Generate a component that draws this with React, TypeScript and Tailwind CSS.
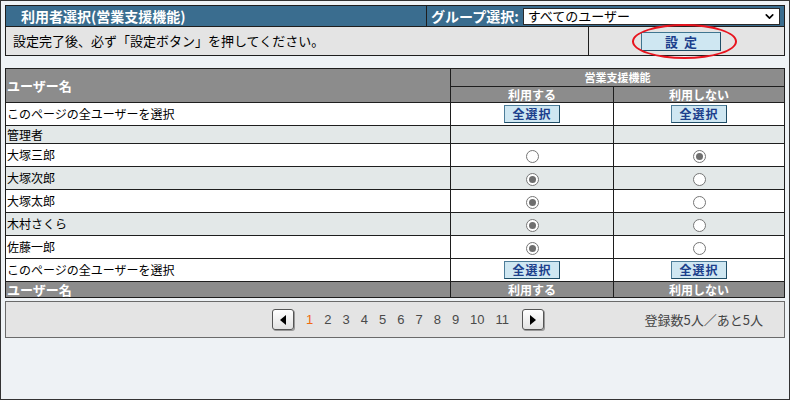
import React from 'react';
import { ChevronDown } from 'lucide-react';

const font = { fontFamily: '"Noto Sans CJK JP", "Liberation Sans", sans-serif' };

type User = { name: string; use: boolean; shade: boolean };

const users: User[] = [
  { name: '大塚三郎', use: false, shade: false },
  { name: '大塚次郎', use: true, shade: true },
  { name: '大塚太郎', use: true, shade: false },
  { name: '木村さくら', use: true, shade: true },
  { name: '佐藤一郎', use: true, shade: false },
];

const Radio = ({ checked }: { checked: boolean }) => (
  <span className="inline-flex items-center justify-center w-[13px] h-[13px] rounded-full border border-[#767676] bg-white align-middle">
    {checked && <span className="w-[7px] h-[7px] rounded-full bg-[#6f6f6f]" />}
  </span>
);

const SelectAllButton = () => (
  <button className="h-[18px] px-[7px] bg-[#cfe7f2] border border-[#4d7d99] border-r-[#1f4d66] border-b-[#1f4d66] text-[12px] leading-none font-bold text-[#1c3f8c] tracking-[1px]">
    全選択
  </button>
);

const PageArrow = ({ dir }: { dir: 'left' | 'right' }) => (
  <button className="w-[22px] h-[21px] flex items-center justify-center rounded-[3px] border border-[#555] bg-gradient-to-b from-white to-[#e2e2e2] shadow-[1px_1px_0_#999]">
    <svg width="6" height="10" viewBox="0 0 6 10">
      {dir === 'left' ? <polygon points="6,0 6,10 0,5" fill="#000" /> : <polygon points="0,0 0,10 6,5" fill="#000" />}
    </svg>
  </button>
);

export default function App() {
  return (
    <div className="w-[790px] h-[400px] bg-[#eef2f5] border border-[#333] px-[4px] pt-[4px] text-[13px] text-black" style={font}>
      {/* title bar */}
      <div className="flex h-[22px] border border-[#1e1e1e] bg-[#3a6d8f]">
        <div className="w-[421px] flex items-center pl-[15px] text-white font-bold text-[14px] border-r border-[#1e1e1e]">
          利用者選択(営業支援機能)
        </div>
        <div className="flex-1 flex items-center pl-[4px] pr-[4px] gap-[4px]">
          <span className="text-white font-bold text-[14px] whitespace-nowrap">グループ選択:</span>
          <div className="flex-1 h-[17px] bg-white border border-[#2a2a2a] flex items-center justify-between pl-[4px] pr-[3px] text-[13px]">
            <span>すべてのユーザー</span>
            <ChevronDown size={13} strokeWidth={3} />
          </div>
        </div>
      </div>

      {/* notice row */}
      <div className="flex h-[29px] border border-t-0 border-[#1e1e1e] bg-[#e4e4e4]">
        <div className="w-[583px] flex items-center pl-[7px] border-r border-[#1e1e1e]">
          設定完了後、必ず「設定ボタン」を押してください。
        </div>
        <div className="flex-1 flex items-center relative">
          <span className="absolute left-[43px] top-[-3px] w-[105px] h-[35px] rounded-[50%] border-2 border-[#e8141e]" />
          <button className="ml-[52px] w-[80px] h-[19px] bg-[#cfe7f2] border border-[#3f7590] border-r-[#1f4d66] border-b-[#1f4d66] text-[#1c3f8c] font-bold text-[13px] leading-none tracking-[6px] pl-[6px]">
            設定
          </button>
        </div>
      </div>

      {/* table */}
      <table className="mt-[12px] w-[780px] border-collapse border border-[#1e1e1e] text-[12px]">
        <thead>
          <tr className="bg-[#8c8c8c] text-white font-bold h-[18px]">
            <th rowSpan={2} className="w-[445px] border border-[#1e1e1e] text-left pl-[1px] text-[13px] font-bold">ユーザー名</th>
            <th colSpan={2} className="border border-[#1e1e1e] text-[11px] font-bold">営業支援機能</th>
          </tr>
          <tr className="bg-[#8c8c8c] text-white h-[16px]">
            <th className="w-[163px] border border-[#1e1e1e] text-[12px] leading-none font-bold">利用する</th>
            <th className="border border-[#1e1e1e] text-[12px] leading-none font-bold">利用しない</th>
          </tr>
        </thead>
        <tbody>
          <tr className="bg-white h-[23px]">
            <td className="border border-[#1e1e1e] pl-[1px]">このページの全ユーザーを選択</td>
            <td className="border border-[#1e1e1e] text-center"><SelectAllButton /></td>
            <td className="border border-[#1e1e1e] text-center"><SelectAllButton /></td>
          </tr>
          <tr className="bg-[#e3e8e8] h-[18px]">
            <td className="border border-[#1e1e1e] pl-[1px] leading-none">管理者</td>
            <td className="border border-[#1e1e1e]" />
            <td className="border border-[#1e1e1e]" />
          </tr>
          {users.map((u) => (
            <tr key={u.name} className={`${u.shade ? 'bg-[#e3e8e8]' : 'bg-white'} h-[23px]`}>
              <td className="border border-[#1e1e1e] pl-[1px]">{u.name}</td>
              <td className="border border-[#1e1e1e] text-center"><Radio checked={u.use} /></td>
              <td className="border border-[#1e1e1e] text-center"><Radio checked={!u.use} /></td>
            </tr>
          ))}
          <tr className="bg-white h-[23px]">
            <td className="border border-[#1e1e1e] pl-[1px]">このページの全ユーザーを選択</td>
            <td className="border border-[#1e1e1e] text-center"><SelectAllButton /></td>
            <td className="border border-[#1e1e1e] text-center"><SelectAllButton /></td>
          </tr>
          <tr className="bg-[#8c8c8c] text-white font-bold h-[16px] leading-none">
            <td className="border border-[#1e1e1e] pl-[1px] text-[13px]">ユーザー名</td>
            <td className="border border-[#1e1e1e] text-center">利用する</td>
            <td className="border border-[#1e1e1e] text-center">利用しない</td>
          </tr>
        </tbody>
      </table>

      {/* pager */}
      <div className="mt-[3px] h-[37px] border border-[#6a6a6a] bg-[#e4e4e4] flex items-center">
        <div className="flex items-center ml-[266px] gap-[9px]">
          <PageArrow dir="left" />
          <div className="flex items-center gap-[11px] text-[13px] text-[#4a4a4a] ml-[3px] mr-[4px]" style={{ fontFamily: '"Liberation Sans", sans-serif' }}>
            <span className="text-[#f06a10]">1</span>
            {[2, 3, 4, 5, 6, 7, 8, 9, 10, 11].map((n) => (
              <span key={n}>{n}</span>
            ))}
          </div>
          <PageArrow dir="right" />
        </div>
        <div className="ml-auto mr-[21px] text-[#444] text-[13px]">登録数5人／あと5人</div>
      </div>
    </div>
  );
}
